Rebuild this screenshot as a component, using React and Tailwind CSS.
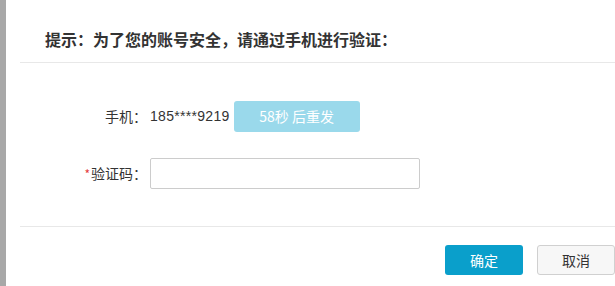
import React from 'react';

const App = () => {
  return (
    <div
      className="w-[615px] h-[286px] flex bg-white overflow-hidden text-[#333]"
      style={{ fontFamily: '"Microsoft YaHei", "Noto Sans CJK SC", "Open Sans", sans-serif' }}
    >
      <div className="w-[6px] shrink-0 bg-[#a8a8a8]" />
      <div className="flex-1 pl-[14px] flex flex-col">
        <div className="h-[63px] border-b border-[#e8e8e8] pt-[28px] pl-[25px]">
          <h3 className="text-[16px] font-bold leading-[22px] text-[#333]">
            提示：为了您的账号安全，请通过手机进行验证：
          </h3>
        </div>

        <div className="h-[163px] pt-[38px] flex flex-col gap-[26px]">
          <div className="flex items-center h-[31px]">
            <label className="w-[130px] pr-[3px] text-right text-[14px] text-[#333]">手机：</label>
            <span
              className="text-[14px] tracking-[0.3px] text-[#333]"
              style={{ fontFamily: '"Liberation Sans", Arial, sans-serif' }}
            >
              185****9219
            </span>
            <button className="ml-[4px] w-[126px] h-[31px] rounded-[3px] bg-[#9ad9eb] text-white text-[14px]">
              58秒 后重发
            </button>
          </div>
          <div className="flex items-center h-[31px]">
            <label className="w-[130px] pr-[3px] text-right text-[14px] text-[#333]">
              <span className="text-[#e4393c] text-[12px] mr-[1px]">*</span>验证码：
            </label>
            <input
              type="text"
              className="w-[270px] h-[31px] border border-[#ccc] rounded-[2px] px-2 text-[14px] outline-none"
            />
          </div>
        </div>

        <div className="flex-1 border-t border-[#e8e8e8] pt-[18px] flex justify-end gap-[14px]">
          <button className="w-[78px] h-[30px] rounded-[3px] bg-[#0a9fcb] text-white text-[14px]">
            确定
          </button>
          <button className="w-[78px] h-[30px] rounded-[3px] border border-[#d0d0d0] bg-[#f7f7f7] text-[#333] text-[14px]">
            取消
          </button>
        </div>
      </div>
    </div>
  );
};

export default App;
